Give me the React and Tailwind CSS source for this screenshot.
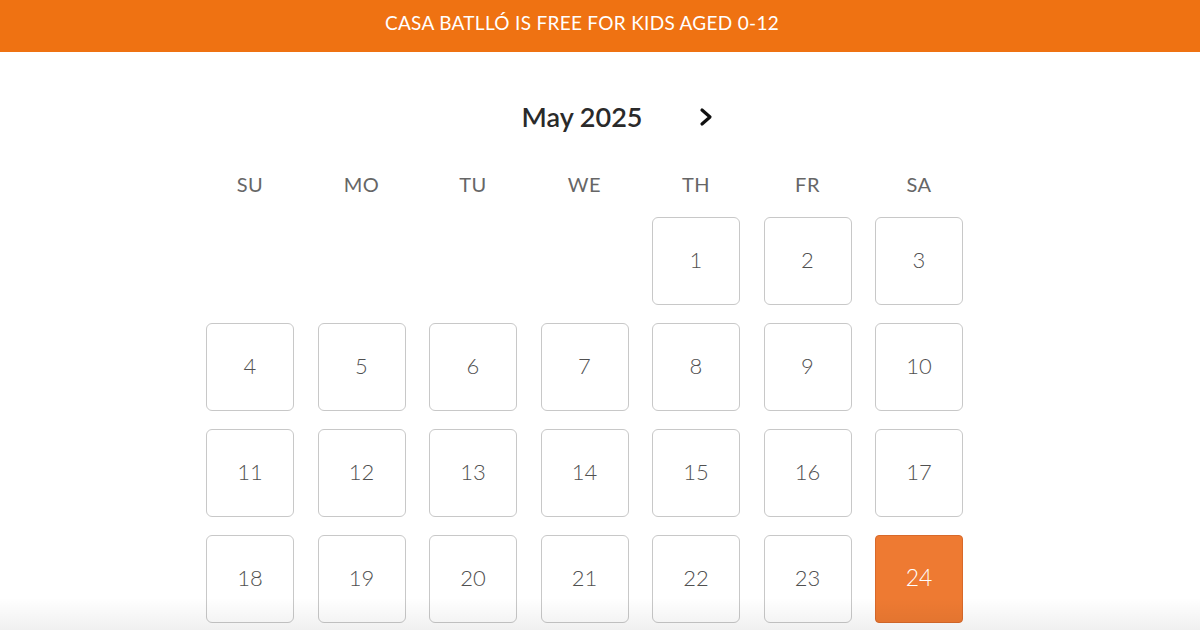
import React from "react";

const headers = ["SU", "MO", "TU", "WE", "TH", "FR", "SA"];
const cells = [null, null, null, null, ...Array.from({ length: 24 }, (_, i) => i + 1)];

export default function App() {
  return (
    <div className="relative w-[1200px] h-[630px] overflow-hidden bg-white" style={{ fontFamily: "Lato, 'Open Sans', sans-serif" }}>
      <div className="h-[52px] bg-[#ef7212] flex items-center justify-center pr-[36px]">
        <span className="text-white text-[19px] tracking-[0.3px] pb-[5px]">CASA BATLLÓ IS FREE FOR KIDS AGED 0-12</span>
      </div>
      <div className="flex flex-col items-center pr-[31px]">
        <div className="relative w-[757px] h-[64px] mt-[33px] flex items-center justify-center">
          <span className="text-[27px] font-semibold text-[#2a2a2a] mr-[5px]">May 2025</span>
          <svg className="absolute left-[491px] top-[22px]" width="18" height="20" viewBox="0 0 18 20">
            <path d="M5 3 L13 10 L5 17" fill="none" stroke="#111" strokeWidth="3.2" strokeLinecap="round" strokeLinejoin="round" />
          </svg>
        </div>
        <div className="w-[757px] grid grid-cols-7 gap-x-[23.5px] mt-[15px]">
          {headers.map((h) => (
            <div key={h} className="h-[40px] flex items-center justify-center text-[20px] text-[#666666] font-normal tracking-[0.5px]">
              {h}
            </div>
          ))}
        </div>
        <div className="w-[757px] grid grid-cols-7 gap-x-[23.5px] gap-y-[18px] mt-[13px]">
          {cells.map((d, i) =>
            d === null ? (
              <div key={i} className="h-[88px]" />
            ) : d === 24 ? (
              <div key={i} className="h-[88px] rounded-[4px] bg-[#ee7a32] border border-[#d8692a] flex items-center justify-center pb-[4px] text-white text-[23px] font-light">
                {d}
              </div>
            ) : (
              <div key={i} className="h-[88px] rounded-[6px] bg-white border border-[#c8c8c8] flex items-center justify-center pb-[4px] text-[#505050] text-[22px] font-light">
                {d}
              </div>
            )
          )}
        </div>
      </div>
      <div className="absolute left-0 right-0 bottom-0 h-[32px] bg-gradient-to-b from-transparent to-[#000]/[0.06] pointer-events-none" />
    </div>
  );
}
